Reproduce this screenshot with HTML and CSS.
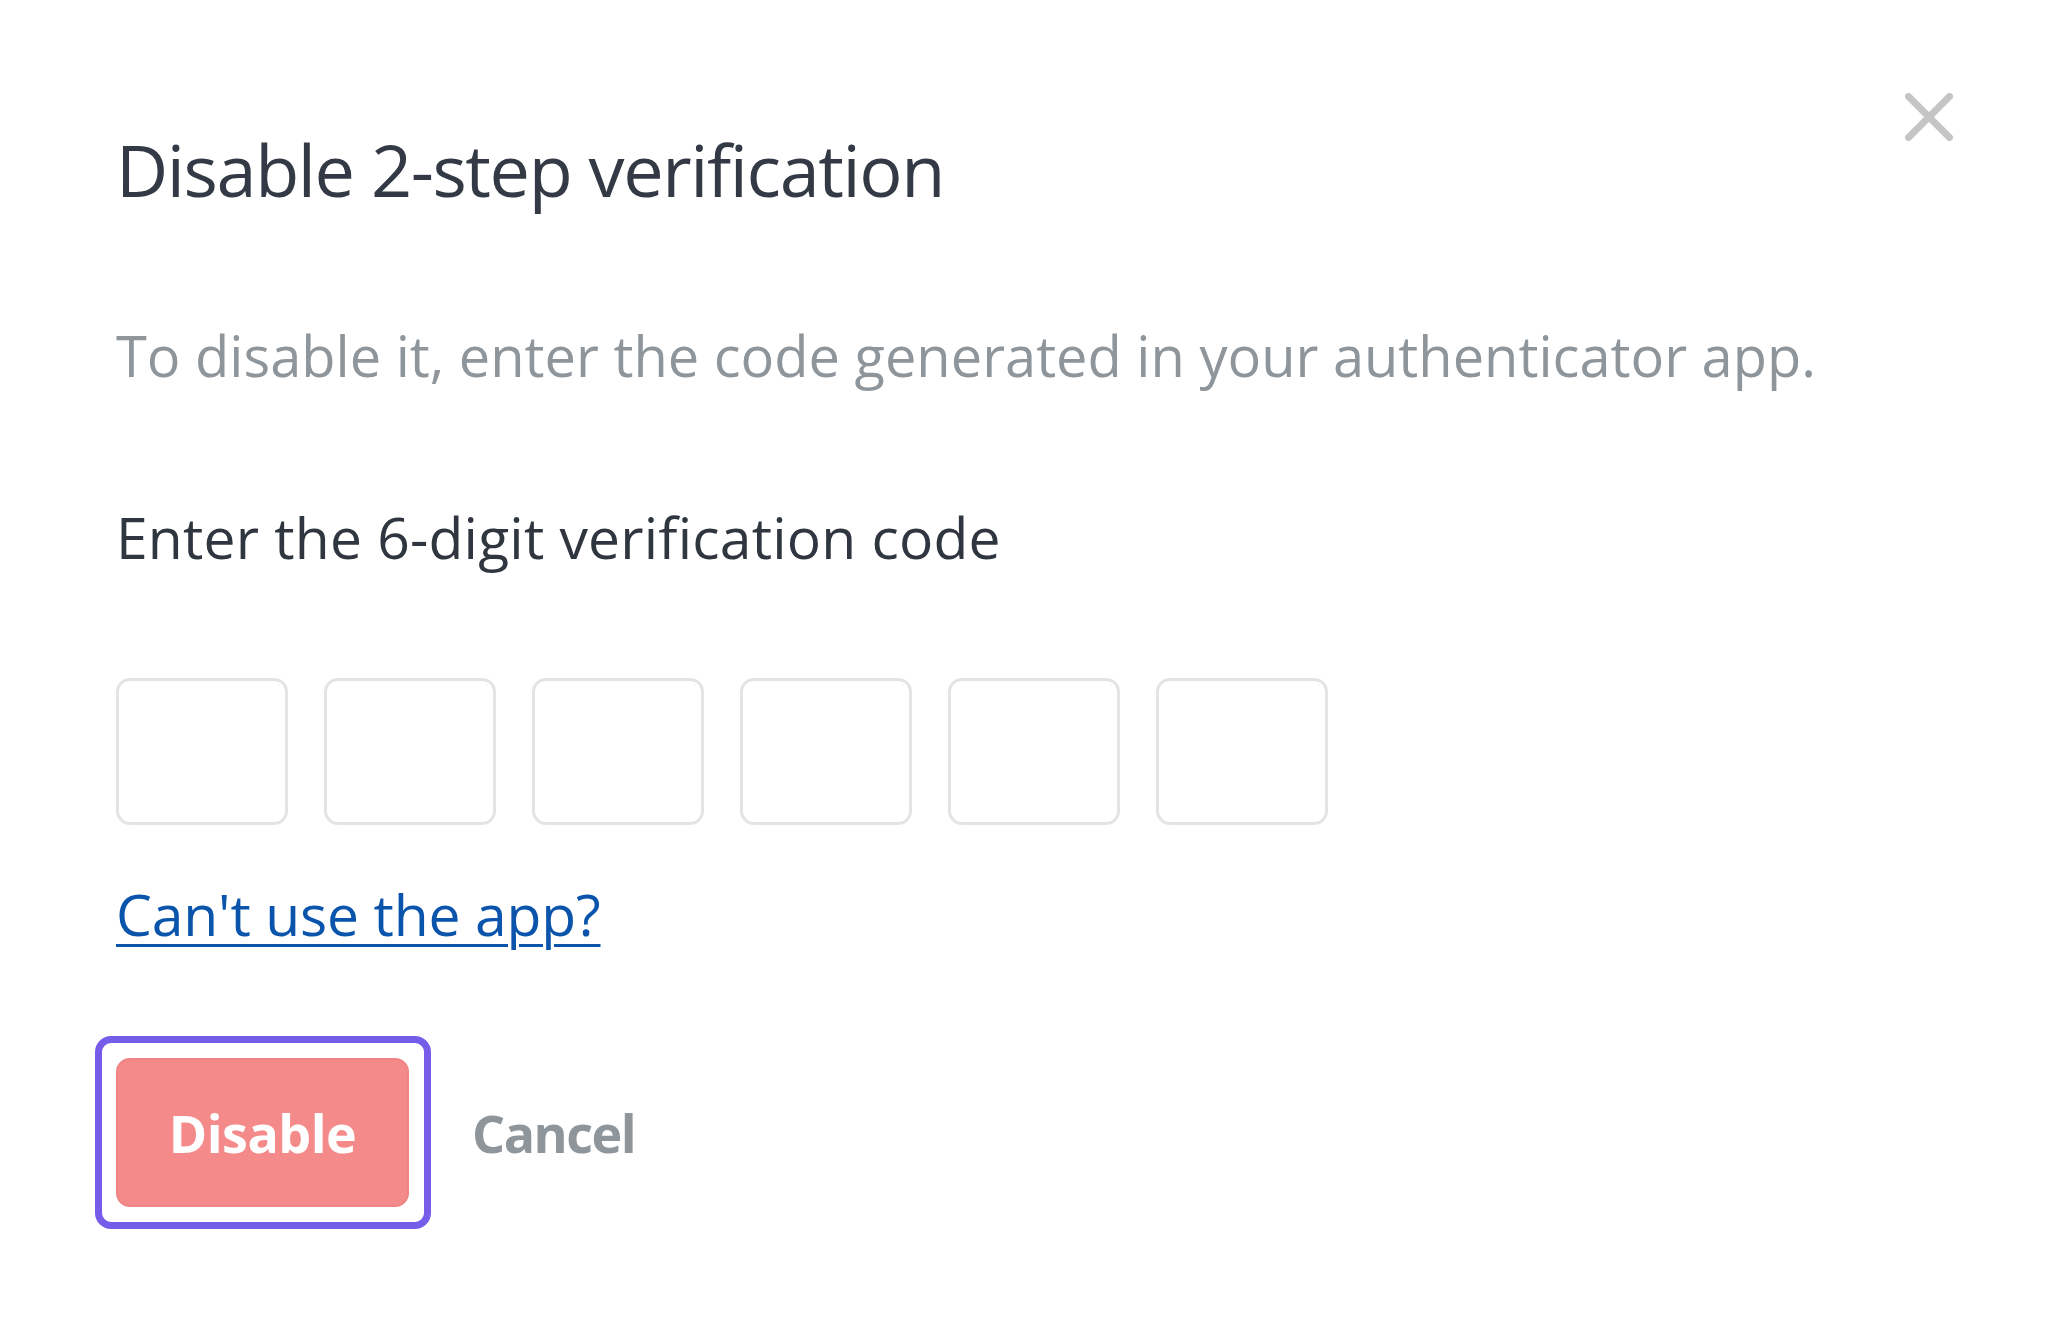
FILE: index.html
```html
<!DOCTYPE html>
<html lang="en">
<head>
<meta charset="utf-8">
<title>Disable 2-step verification</title>
<link rel="stylesheet" href="styles.css">
</head>
<body>
<div class="modal">
  <button class="close" aria-label="Close">
    <svg width="48" height="48" viewBox="0 0 48 48"><path d="M3.5 3.5 L44.5 44.5 M44.5 3.5 L3.5 44.5" stroke="#c5c5c5" stroke-width="7" stroke-linecap="round" fill="none"/></svg>
  </button>
  <h1 class="title">Disable 2-step verification</h1>
  <p class="desc">To disable it, enter the code generated in your authenticator app.</p>
  <p class="label">Enter the 6-digit verification code</p>
  <div class="code-row">
    <input class="digit" type="text" maxlength="1">
    <input class="digit" type="text" maxlength="1">
    <input class="digit" type="text" maxlength="1">
    <input class="digit" type="text" maxlength="1">
    <input class="digit" type="text" maxlength="1">
    <input class="digit" type="text" maxlength="1">
  </div>
  <p class="help"><a href="#">Can't use the app?</a></p>
  <div class="actions">
    <div class="focus-ring"><button class="btn-danger">Disable</button></div>
    <button class="btn-cancel">Cancel</button>
  </div>
</div>
</body>
</html>
```
FILE: styles.css
```css
html, body {
  margin: 0;
  background: #ffffff;
}
body {
  font-family: "Open Sans", "Noto Sans", sans-serif;
}
.modal {
  position: relative;
  box-sizing: border-box;
  height: 1323px;
  padding: 133px 0 0 116px;
}
.close {
  position: absolute;
  top: 93px;
  right: 95px;
  width: 48px;
  height: 48px;
  padding: 0;
  border: 0;
  background: none;
}
.close svg {
  display: block;
}
.title {
  margin: 0;
  font-size: 72px;
  line-height: 1;
  font-weight: 400;
  letter-spacing: -1.4px;
  color: #343a45;
}
.desc {
  margin: 122px 0 0;
  font-size: 56px;
  line-height: 1;
  color: #8e959b;
}
.label {
  margin: 126px 0 0;
  font-size: 57px;
  line-height: 1;
  letter-spacing: 0.2px;
  color: #30363f;
}
.code-row {
  display: flex;
  gap: 36px;
  margin-top: 112px;
}
.digit {
  box-sizing: border-box;
  width: 172px;
  height: 147px;
  padding: 0;
  border: 3px solid #e4e4e4;
  border-radius: 14px;
  background: #ffffff;
  outline: none;
}
.help {
  margin: 61px 0 0;
  font-size: 57px;
  line-height: 1;
  letter-spacing: -0.15px;
}
.help a {
  color: #0a55ab;
  text-decoration: underline;
  text-decoration-thickness: 3px;
  text-underline-offset: 8px;
}
.actions {
  display: flex;
  align-items: center;
  margin-top: 93px;
}
.focus-ring {
  margin-left: -21px;
  padding: 15px 15px 15px 14px;
  border: 7px solid #765de9;
  border-radius: 16px;
}
.btn-danger {
  display: block;
  box-sizing: border-box;
  width: 293px;
  height: 149px;
  padding: 0;
  border: 2px solid #f08383;
  border-radius: 14px;
  background: #f58a8a;
  color: #ffffff;
  font-family: "Open Sans", "Noto Sans", sans-serif;
  font-weight: 700;
  font-size: 52px;
  letter-spacing: -0.5px;
}
.btn-cancel {
  margin-left: 41px;
  padding: 0;
  border: 0;
  background: none;
  color: #8e959b;
  font-family: "Open Sans", "Noto Sans", sans-serif;
  font-weight: 700;
  font-size: 52px;
  letter-spacing: -1.5px;
}
```
